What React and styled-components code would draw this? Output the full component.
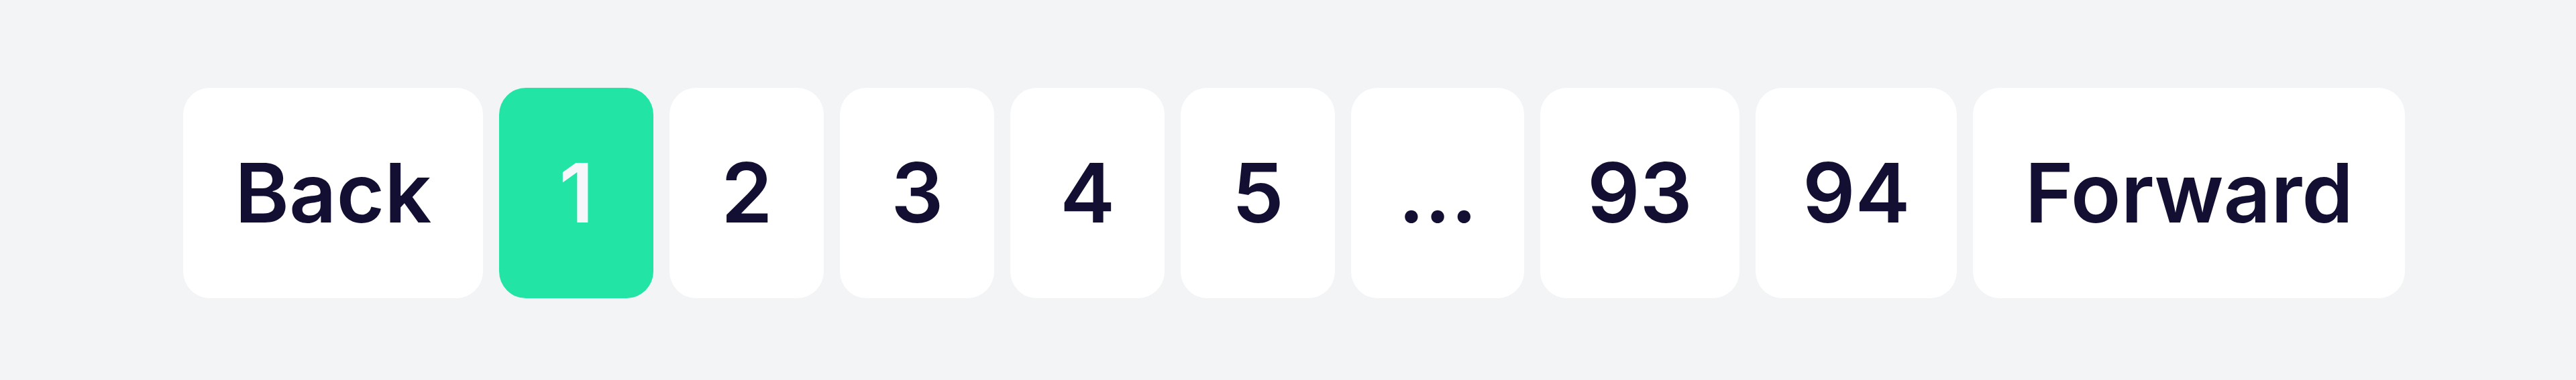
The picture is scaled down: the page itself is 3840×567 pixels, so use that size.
import React from "react";
import styled, { createGlobalStyle } from "styled-components";

const GlobalStyle = createGlobalStyle`
  html, body {
    margin: 0;
    padding: 0;
    background: #f3f4f6;
  }
  body {
    font-family: Inter, "Noto Sans", Roboto, sans-serif;
  }
`;

const Page = styled.main`
  box-sizing: border-box;
  height: 567px;
  display: flex;
  align-items: center;
  justify-content: center;
  padding: 8px 0 0 18px;
`;

const Pager = styled.nav`
  display: flex;
  align-items: stretch;
  gap: 24px;
`;

const PageButton = styled.button`
  box-sizing: border-box;
  height: 314px;
  min-width: 230px;
  padding: 0 ${(p) => (p.$word ? "77px" : "70px")};
  border: none;
  border-radius: 40px;
  background: ${(p) => (p.$active ? "#22e5a5" : "#ffffff")};
  color: ${(p) => (p.$active ? "#f6f6fb" : "#120f33")};
  font-family: Inter, "Noto Sans", sans-serif;
  font-size: 123px;
  font-weight: 600;
  line-height: 1;
  display: flex;
  align-items: center;
  justify-content: center;
  cursor: pointer;
`;

const pages = ["1", "2", "3", "4", "5", "...", "93", "94"];

export default function App() {
  return (
    <>
      <GlobalStyle />
      <Page>
        <Pager aria-label="Pagination">
          <PageButton $word>Back</PageButton>
          {pages.map((label) => (
            <PageButton key={label} $active={label === "1"}>
              {label}
            </PageButton>
          ))}
          <PageButton $word>Forward</PageButton>
        </Pager>
      </Page>
    </>
  );
}
